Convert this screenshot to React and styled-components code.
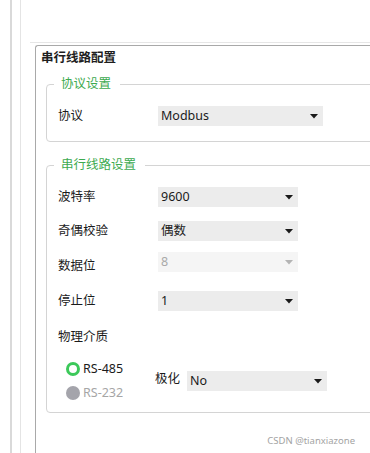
import React from 'react'
import styled, { createGlobalStyle } from 'styled-components'

const GlobalStyle = createGlobalStyle`
  html, body {
    margin: 0;
    padding: 0;
    background: #ffffff;
  }
  body {
    font-family: "Noto Sans", "Noto Sans CJK SC", sans-serif;
    font-size: 12.5px;
    color: #1b1b1b;
  }
`

const rows = [
  { label: '波特率', value: '9600', gap: 0 },
  { label: '奇偶校验', value: '偶数', gap: 14 },
  { label: '数据位', value: '8', gap: 11, disabled: true, drop: 4 },
  { label: '停止位', value: '1', gap: 15 },
]

const Arrow = ({ disabled }) => (
  <svg width="8" height="5" viewBox="0 0 8 5">
    <polygon points="0,0 8,0 4,4.5" fill={disabled ? '#b4b4b4' : '#1a1a1a'} />
  </svg>
)

const Select = ({ value, width = 140, disabled }) => (
  <SelectBox $width={width} $disabled={disabled}>
    <span>{value}</span>
    <Arrow disabled={disabled} />
  </SelectBox>
)

export default function App() {
  return (
    <>
      <GlobalStyle />
      <Page>
        <OuterFrame>
          <InnerFrame>
            <Content>
              <TopRule>
                <Panel>
                  <PanelTitle>串行线路配置</PanelTitle>

                  <GroupBox $gap={5}>
                    <Legend>协议设置</Legend>
                    <Row>
                      <Label>协议</Label>
                      <Select value="Modbus" width={165} />
                    </Row>
                  </GroupBox>

                  <GroupBox $gap={14} $bottom={7}>
                    <Legend>串行线路设置</Legend>
                    {rows.map((r) => (
                      <Row key={r.label} $gap={r.gap}>
                        <Label $drop={r.drop}>{r.label}</Label>
                        <Select value={r.value} disabled={r.disabled} />
                      </Row>
                    ))}
                    <Row $gap={16}>
                      <Label>物理介质</Label>
                    </Row>
                    <MediaRow>
                      <RadioGroup>
                        <Radio>
                          <Dot $checked />
                          RS-485
                        </Radio>
                        <Radio $disabled>
                          <Dot $disabled />
                          RS-232
                        </Radio>
                      </RadioGroup>
                      <SmallLabel>极化</SmallLabel>
                      <Select value="No" />
                    </MediaRow>
                  </GroupBox>
                </Panel>
              </TopRule>
            </Content>
          </InnerFrame>
        </OuterFrame>
        <Watermark>CSDN @tianxiazone</Watermark>
      </Page>
    </>
  )
}

const Page = styled.div`
  position: relative;
  height: 453px;
  overflow: hidden;
  display: flex;
`

const OuterFrame = styled.div`
  margin-left: 10px;
  padding-left: 8px;
  border-left: 2px solid #d9d9d9;
  flex: 1;
  display: flex;
`

const InnerFrame = styled.div`
  border-left: 1px solid #e4e4e4;
  flex: 1;
  display: flex;
  min-width: 0;
`

const Content = styled.div`
  flex: 1;
  padding-top: 42px;
  min-width: 0;
`

const TopRule = styled.div`
  margin-left: 9px;
  border-top: 1px solid #e6e6e6;
`

const Panel = styled.section`
  margin: 2px 0 0 5px;
  width: calc(100% + 20px);
  min-height: 420px;
  border: 1px solid #a9a9a9;
  border-right: none;
  border-bottom: none;
  border-radius: 3px 0 0 0;
  padding: 0 0 0 10px;
  box-sizing: border-box;
`

const PanelTitle = styled.h3`
  margin: 0 0 0 -5px;
  font-size: 12.5px;
  font-weight: 700;
  line-height: 24px;
  color: #1e1e1e;
`

const GroupBox = styled.fieldset`
  margin: ${({ $gap }) => $gap || 4}px 0 0 0;
  padding: 13px 0 ${({ $bottom }) => $bottom ?? 15}px 7px;
  border: 1px solid #d4d4d4;
  border-radius: 4px;
  min-width: 0;
`

const Legend = styled.legend`
  padding: 0 9px 0 7px;
  line-height: 18px;
  color: #3daa4f;
  font-size: 12.5px;
`

const Row = styled.div`
  display: flex;
  align-items: flex-start;
  padding-left: 4px;
  margin-top: ${({ $gap }) => $gap || 0}px;
`

const Label = styled.div`
  width: 100px;
  line-height: 20px;
  padding-top: ${({ $drop }) => $drop || 0}px;
  color: #1b1b1b;
`

const SelectBox = styled.div`
  width: ${({ $width }) => $width}px;
  height: 20px;
  box-sizing: border-box;
  display: flex;
  align-items: center;
  justify-content: space-between;
  padding: 0 5px 0 3px;
  background: ${({ $disabled }) => ($disabled ? '#f5f5f5' : '#ececec')};
  color: ${({ $disabled }) => ($disabled ? '#a9a9a9' : '#1b1b1b')};
  line-height: 20px;
`

const MediaRow = styled.div`
  display: flex;
  align-items: center;
  margin-top: 10px;
  padding-left: 12px;
`

const RadioGroup = styled.div`
  width: 89px;
  display: flex;
  flex-direction: column;
`

const Radio = styled.div`
  display: flex;
  align-items: center;
  gap: 3px;
  line-height: 24px;
  color: ${({ $disabled }) => ($disabled ? '#a6a6a6' : '#1b1b1b')};
`

const Dot = styled.span`
  width: 14px;
  height: 14px;
  border-radius: 50%;
  box-sizing: border-box;
  background: ${({ $checked }) => ($checked ? '#ffffff' : '#a4a4ab')};
  border: ${({ $checked }) => ($checked ? '3.5px solid #3cc95a' : 'none')};
`

const SmallLabel = styled.div`
  width: 32px;
  line-height: 20px;
  margin-bottom: 4px;
`

const Watermark = styled.div`
  position: absolute;
  right: 15px;
  bottom: 6px;
  font-size: 9.5px;
  color: #a3a3a3;
`
